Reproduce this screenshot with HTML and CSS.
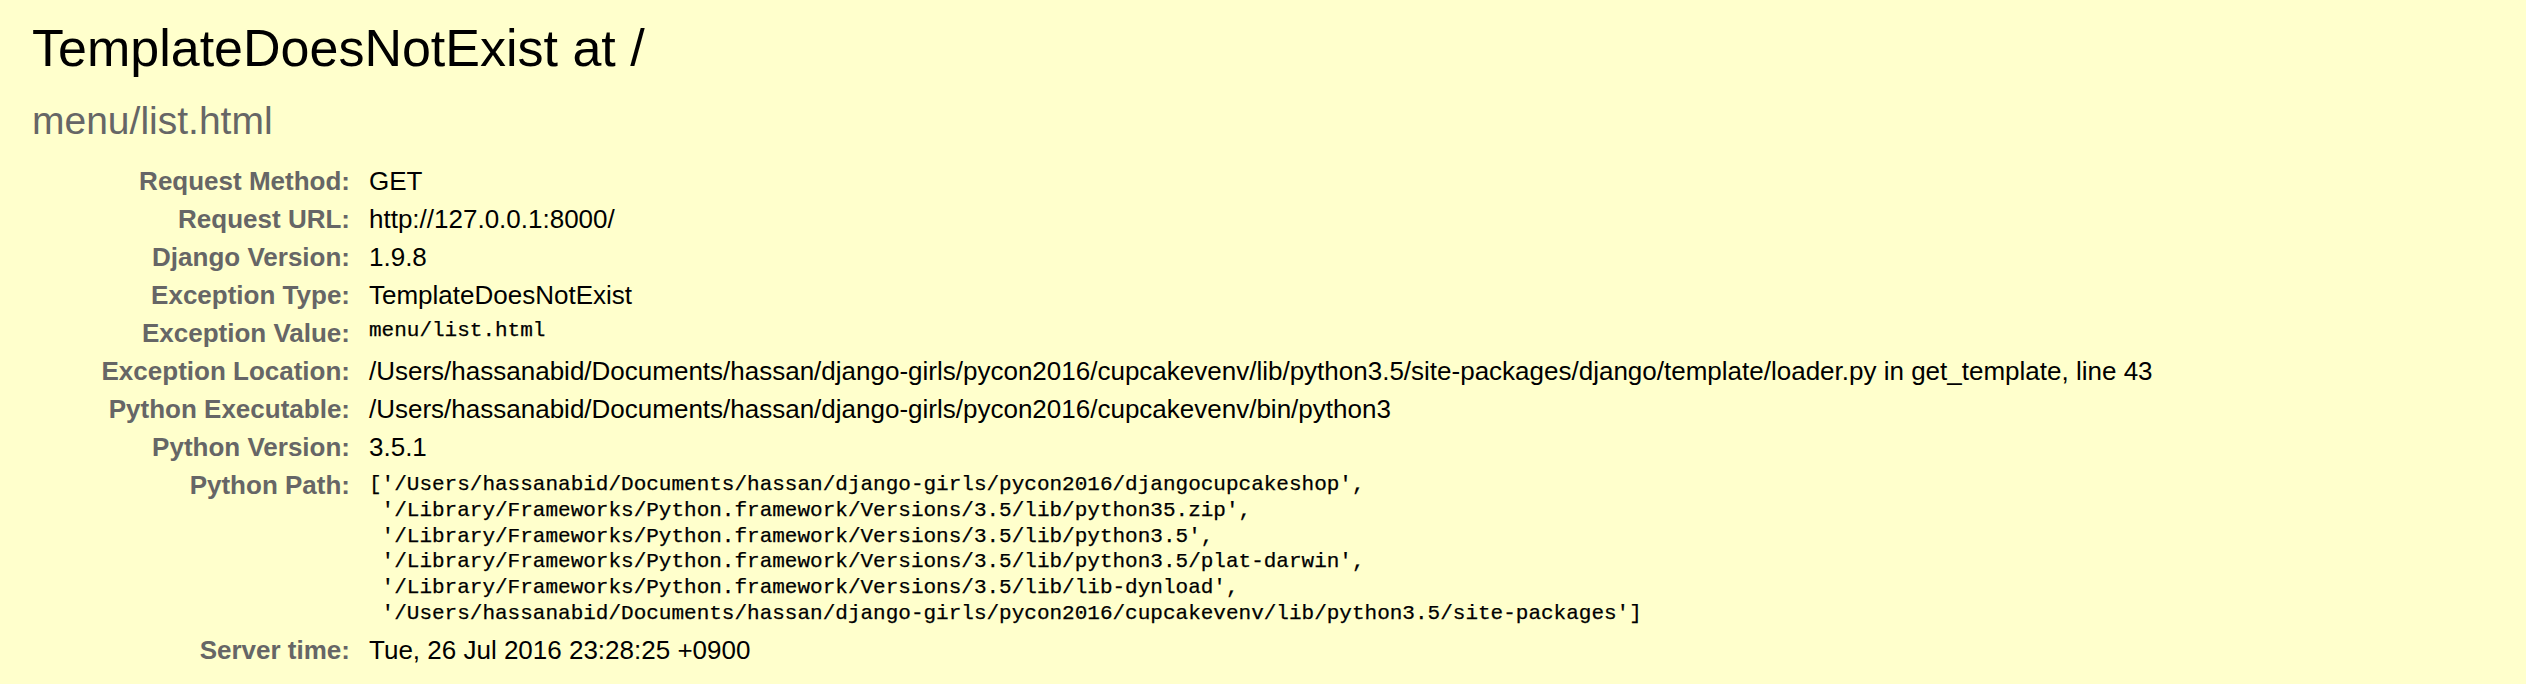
FILE: index.html
```html
<!DOCTYPE html>
<html lang="en">
<head>
<meta charset="utf-8">
<title>TemplateDoesNotExist at /</title>
<link rel="stylesheet" href="styles.css">
</head>
<body>
<div class="summary">
  <h1 class="title">TemplateDoesNotExist at /</h1>
  <pre class="exception-value">menu/list.html</pre>
  <table class="meta">
    <tbody>
      <tr><th>Request Method:</th><td>GET</td></tr>
      <tr><th>Request URL:</th><td>http://127.0.0.1:8000/</td></tr>
      <tr><th>Django Version:</th><td>1.9.8</td></tr>
      <tr><th>Exception Type:</th><td>TemplateDoesNotExist</td></tr>
      <tr><th>Exception Value:</th><td><pre class="mono mono-single">menu/list.html</pre></td></tr>
      <tr><th>Exception Location:</th><td>/Users/hassanabid/Documents/hassan/django-girls/pycon2016/cupcakevenv/lib/python3.5/site-packages/django/template/loader.py in get_template, line 43</td></tr>
      <tr><th>Python Executable:</th><td>/Users/hassanabid/Documents/hassan/django-girls/pycon2016/cupcakevenv/bin/python3</td></tr>
      <tr><th>Python Version:</th><td>3.5.1</td></tr>
      <tr><th>Python Path:</th><td><pre class="mono mono-block">['/Users/hassanabid/Documents/hassan/django-girls/pycon2016/djangocupcakeshop',
 '/Library/Frameworks/Python.framework/Versions/3.5/lib/python35.zip',
 '/Library/Frameworks/Python.framework/Versions/3.5/lib/python3.5',
 '/Library/Frameworks/Python.framework/Versions/3.5/lib/python3.5/plat-darwin',
 '/Library/Frameworks/Python.framework/Versions/3.5/lib/lib-dynload',
 '/Users/hassanabid/Documents/hassan/django-girls/pycon2016/cupcakevenv/lib/python3.5/site-packages']</pre></td></tr>
      <tr><th>Server time:</th><td>Tue, 26 Jul 2016 23:28:25 +0900</td></tr>
    </tbody>
  </table>
</div>
</body>
</html>
```

FILE: styles.css
```css
html {
  background: #ffffcc;
}
body {
  margin: 0;
  padding: 0;
  background: #ffffcc;
  color: #000;
  font-family: "Liberation Sans", Arial, Helvetica, sans-serif;
  font-size: 26px;
}
.summary {
  padding: 18px 0 0 32px;
}
.title {
  margin: 0;
  font-size: 52px;
  font-weight: normal;
  line-height: 60px;
}
.exception-value {
  margin: 20px 0 19px 0;
  font-family: "Liberation Sans", Arial, Helvetica, sans-serif;
  font-size: 39px;
  line-height: 45px;
  color: #666;
  white-space: pre-wrap;
}
.meta {
  border: none;
  border-collapse: collapse;
  background: transparent;
}
.meta th,
.meta td {
  vertical-align: top;
  padding: 4px 6px;
  line-height: 30px;
}
.meta th {
  width: 312px;
  text-align: right;
  color: #666;
  font-weight: bold;
  padding-right: 13px;
  white-space: nowrap;
}
.meta td {
  text-align: left;
  white-space: nowrap;
}
.mono {
  margin: 0;
  font-family: "Liberation Mono", "Courier New", monospace;
  font-size: 21px;
  white-space: pre;
  -webkit-text-stroke: 0.25px #000;
}
.mono-single {
  line-height: 24px;
  padding-top: 1px;
}
.mono-block {
  line-height: 25.8px;
  padding-top: 2px;
}
```
